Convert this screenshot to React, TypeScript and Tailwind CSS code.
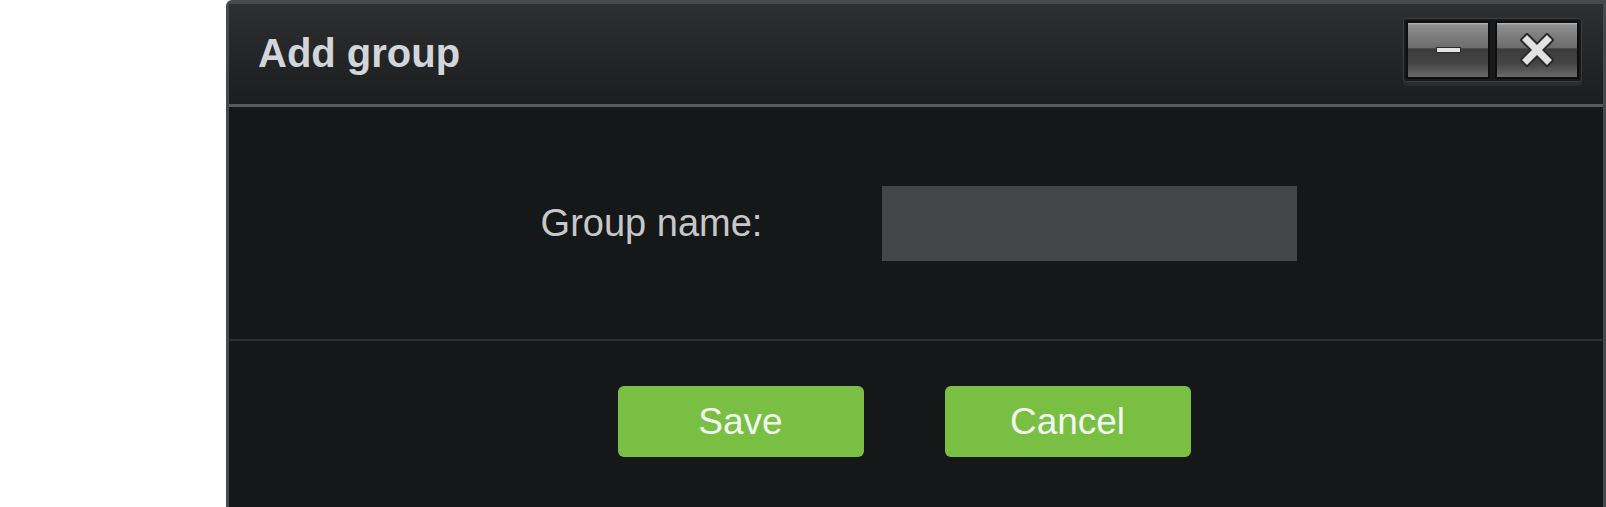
import React, { useState } from 'react';

const TitleButton = ({ children }: { children: React.ReactNode }) => (
    <button className="w-[84px] h-[58px] flex items-center justify-center border-2 border-[#0e0e0f] bg-[linear-gradient(to_bottom,#bdbdbd_0%,#8e8e8e_4%,#6c6c6c_46%,#3b3b3b_48%,#444_75%,#6a6a6a_100%)]">
        {children}
    </button>
);

const AddGroupDialog = () => {
    const [name, setName] = useState("");

    return (
        <div className="ml-[226px] w-[1380px] h-[507px] flex flex-col bg-[#161719] border-l-[3px] border-t-4 border-r-[3px] border-[#48494b] rounded-tl-md font-['Liberation_Sans',Arial,sans-serif]">
            {/* Header */}
            <div className="h-[103px] flex items-center justify-between pl-[29px] pr-[21px] bg-gradient-to-b from-[#2e2f31] to-[#1c1d1f] border-b-[3px] border-[#58595b]">
                <h1 className="text-[40px] font-bold text-[#d2d6da] leading-none -mt-[2px]">Add group</h1>
                <div className="flex gap-[5px] p-[2px] -mt-[8px] rounded-[3px] border border-[#3c3d40] bg-[#18191b] shadow-[0_4px_0_#2a2b2d]">
                    <TitleButton>
                        <span className="block w-[25px] h-[6px] bg-[#e4e4e4] border border-[#2a2a2a]" />
                    </TitleButton>
                    <TitleButton>
                        <svg width="34" height="34" viewBox="0 0 34 34">
                            <path d="M7 7 L27 27 M27 7 L7 27" stroke="#2a2a2a" strokeWidth="11" strokeLinecap="square" />
                            <path d="M7 7 L27 27 M27 7 L7 27" stroke="#e2e2e2" strokeWidth="7" strokeLinecap="square" />
                        </svg>
                    </TitleButton>
                </div>
            </div>

            {/* Body */}
            <div className="h-[234px] flex items-center justify-center gap-[120px] pl-[6px] border-b-2 border-[#2f3032]">
                <label htmlFor="groupName" className="text-[38px] text-[#c6c7c8] leading-none">Group name:</label>
                <input
                    id="groupName"
                    type="text"
                    value={name}
                    onChange={(e) => setName(e.target.value)}
                    className="w-[415px] h-[75px] bg-[#454648] text-[#ddd] text-[30px] px-3 focus:outline-none"
                />
            </div>

            {/* Footer */}
            <div className="flex-1 flex justify-center gap-[81px] pt-[45px] pr-[24px]">
                <button className="w-[246px] h-[71px] rounded-[6px] bg-[#79bf43] text-[37px] text-[#f3f6ef] leading-none">Save</button>
                <button className="w-[246px] h-[71px] rounded-[6px] bg-[#79bf43] text-[37px] text-[#f3f6ef] leading-none">Cancel</button>
            </div>
        </div>
    );
};

export default function App() {
    return (
        <div className="w-[1606px] h-[507px] bg-white overflow-hidden">
            <AddGroupDialog />
        </div>
    );
}
